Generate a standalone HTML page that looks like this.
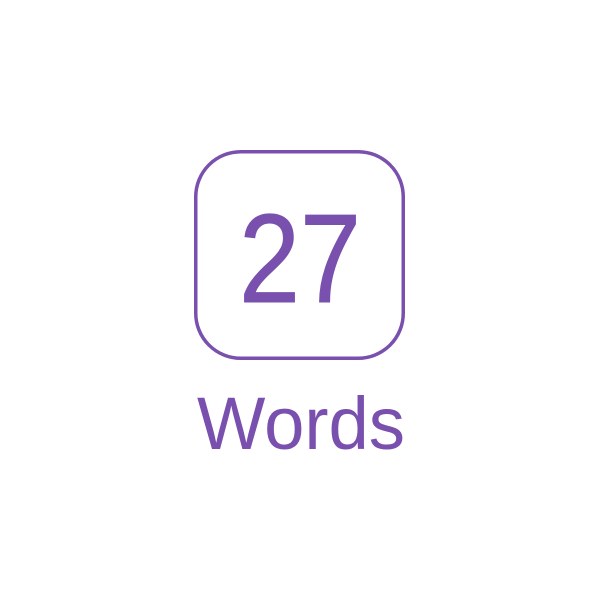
<!DOCTYPE html>
<html><head><style>html,body{margin:0;padding:0;background:#fff;width:600px;height:600px;overflow:hidden}</style></head>
<body>
<svg width="600" height="600" viewBox="0 0 600 600" xmlns="http://www.w3.org/2000/svg">
<rect x="195.75" y="151.75" width="207.5" height="206.5" rx="45" ry="45" fill="none" stroke="#7a50ae" stroke-width="3.5"/>
<text x="239" y="302" font-family="Liberation Sans, sans-serif" font-size="126" fill="#7a50ae" textLength="122" lengthAdjust="spacingAndGlyphs" stroke="#7a50ae" stroke-width="1">27</text>
<text x="197" y="449" font-family="Liberation Sans, sans-serif" font-size="74" fill="#7a50ae" textLength="208" lengthAdjust="spacingAndGlyphs">Words</text>
</svg>
</body></html>
